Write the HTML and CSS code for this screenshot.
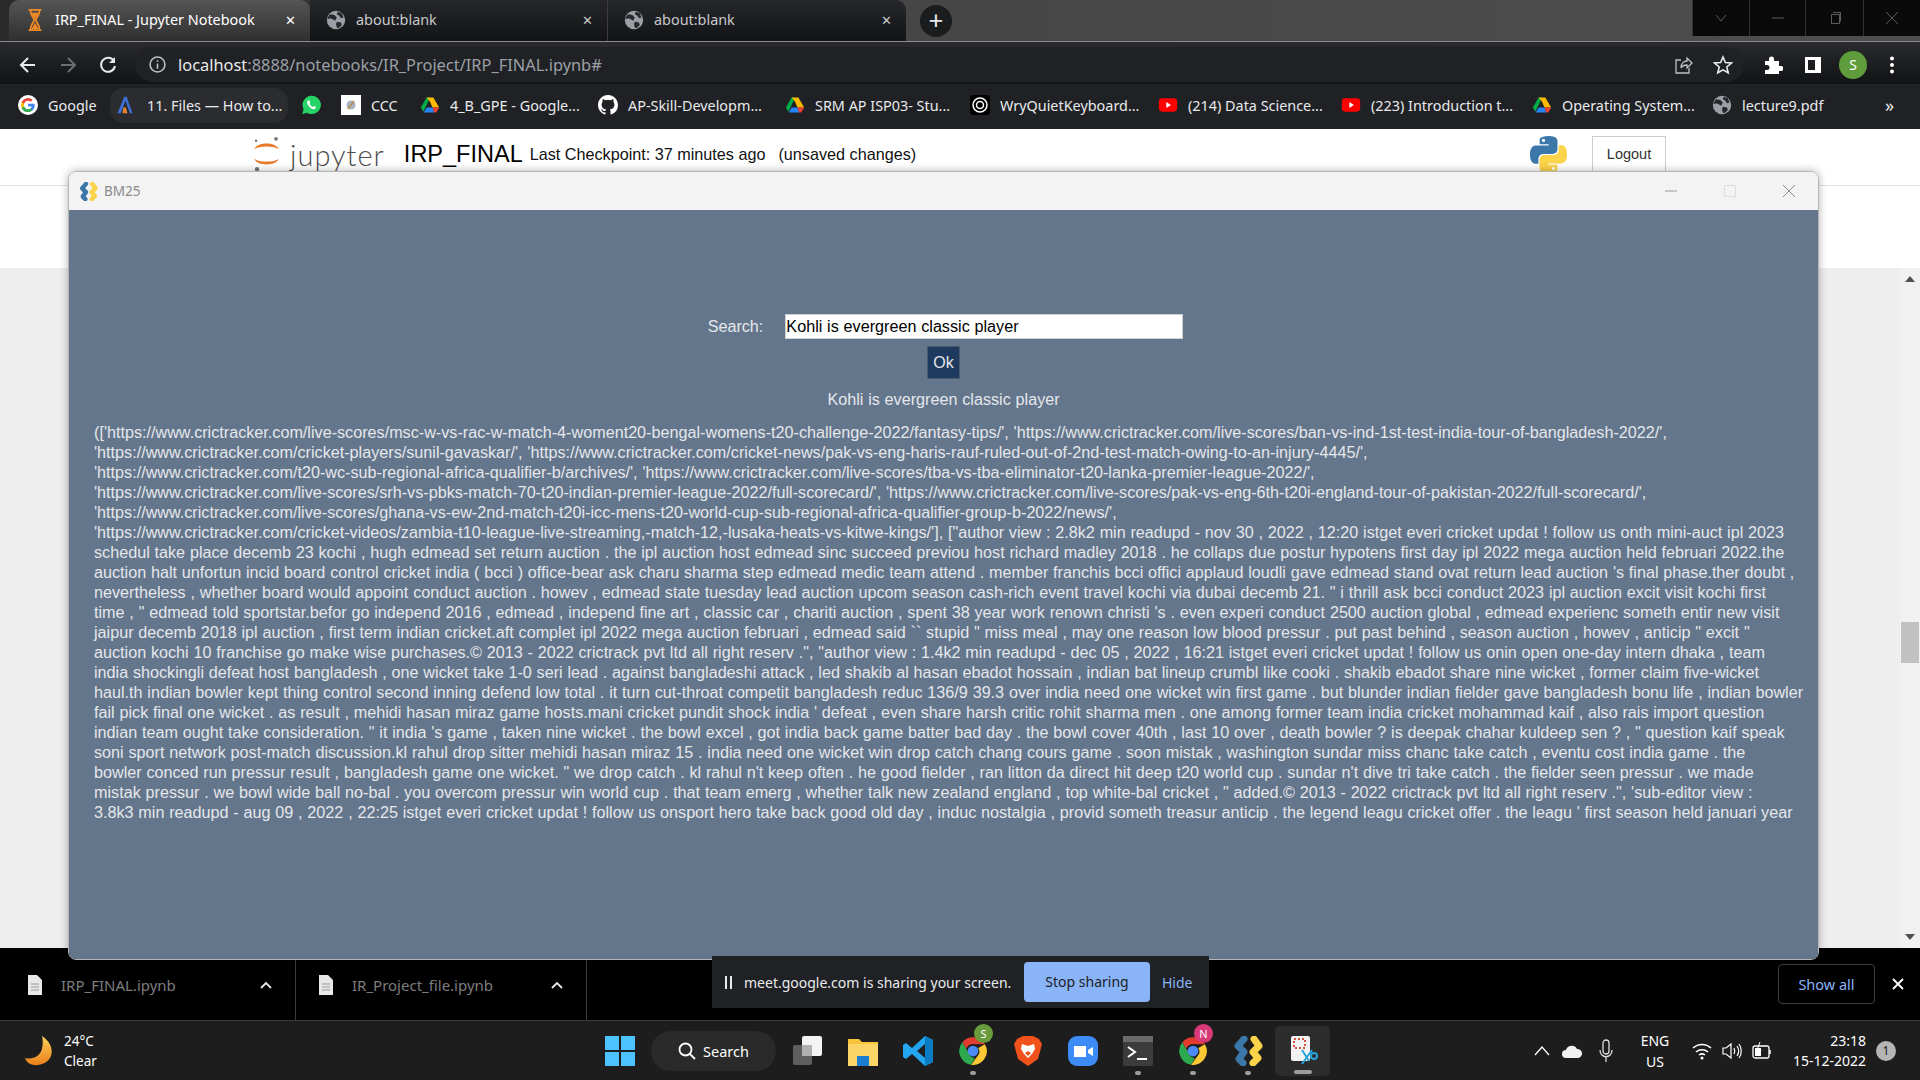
FILE: index.html
```html
<!DOCTYPE html>
<html lang="en">
<head>
    <meta charset="UTF-8">
    <title>IRP_FINAL - Jupyter Notebook</title>
    <link rel="stylesheet" href="styles.css">
</head>
<body>
    <!-- shared icons -->
    <svg class="defs" width="0" height="0">
        <symbol id="globe" viewBox="0 0 24 24">
            <circle cx="12" cy="12" r="11" fill="#9aa0a6"/>
            <path d="M5 5l5 1 3 3-2 4-3-2-3-1-3 1c0-2 1-4 3-6zM13 14l5 1 1 3-4 4-2-1-1-4zM14 2l5 2 2 5-3 1-2-3-3-2z" fill="#26282b"/>
        </symbol>
        <symbol id="drive" viewBox="0 0 24 24">
            <path d="M8 3h4L7 14 4 20 1 15z" fill="#00ac47"/>
            <path d="M8 3h8l7 12h-8L12 8z" fill="#ffba00"/>
            <path d="M8 15h7l2 6H4.500z" fill="#2684fc"/>
            <path d="M15 15h8l-3.500 6H17z" fill="#ea4335"/>
        </symbol>
        <symbol id="youtube" viewBox="0 0 24 24">
            <rect x="1" y="4" width="22" height="16" rx="4" fill="#f00"/>
            <path d="M10 8.500l5.500 3.500-5.500 3.500z" fill="#fff"/>
        </symbol>
        <symbol id="python" viewBox="0 0 110 110">
            <path fill-rule="evenodd" d="M54.900 0C26.800 0 28.600 12.200 28.600 12.200v12.600h26.800v3.800H17.900S0 26.600 0 54.900s15.600 27.300 15.600 27.300h9.300V69s-.5-15.600 15.400-15.600h26.500s14.900.2 14.900-14.400V14.900S84 0 54.900 0zM40.200 8.500a4.800 4.800 0 1 1 0 9.600 4.800 4.800 0 0 1 0-9.600z" fill="#3b77a8"/>
            <path fill-rule="evenodd" transform="rotate(180 55 55)" d="M54.900 0C26.800 0 28.600 12.200 28.600 12.200v12.600h26.800v3.800H17.900S0 26.600 0 54.900s15.600 27.300 15.600 27.300h9.300V69s-.5-15.600 15.400-15.600h26.500s14.900.2 14.900-14.400V14.900S84 0 54.900 0zM40.200 8.500a4.800 4.800 0 1 1 0 9.600 4.800 4.800 0 0 1 0-9.600z" fill="#fcd449"/>
        </symbol>
        <symbol id="python-app" viewBox="0 0 30 30">
            <path d="M11 3L5 10l6 6-5 7 4 4" fill="none" stroke="#3b77a8" stroke-width="7" stroke-linejoin="round" stroke-linecap="round"/>
            <path d="M21 3l5 7-6 6 5 6-5 5" fill="none" stroke="#fcd449" stroke-width="7" stroke-linejoin="round" stroke-linecap="round"/>
        </symbol>
        <symbol id="chrome" viewBox="0 0 24 24">
            <path d="M12 1a11 11 0 0 1 9.500 5.500H12a5.500 5.500 0 0 0-5.200 3.700L3.500 5A11 11 0 0 1 12 1z" fill="#e33b2e"/>
            <path d="M3.500 5l5 8.500a5.500 5.500 0 0 0 5 4l-3 5.400A11 11 0 0 1 3.500 5z" fill="#2da94f"/>
            <path d="M21.500 6.500A11 11 0 0 1 10.500 23l4.700-6.500a5.500 5.500 0 0 0 1-7z" fill="#fcc934"/>
            <circle cx="12" cy="12" r="4.300" fill="#4c8bf5"/>
        </symbol>
        <symbol id="doc" viewBox="0 0 14 20">
            <path d="M0 0h9l5 5v15H0z" fill="#e8e8e8"/>
            <path d="M3 9h8M3 12h8M3 15h8" stroke="#999" stroke-width="1"/>
        </symbol>
    </svg>

    <div class="tabstrip">
        <div class="tab tab-active">
            <svg class="tab-icon" viewBox="0 0 18 24"><path d="M2 1h14M2 23h14M4 1c0 7 4 8 4 11s-4 4-4 11M14 1c0 7-4 8-4 11s4 4 4 11" fill="none" stroke="#f08a24" stroke-width="2"/><path d="M5 4h8l-4 7zM9 15l4 7H5z" fill="#f08a24"/></svg>
            <span class="tab-title">IRP_FINAL - Jupyter Notebook</span>
            <span class="tab-close">&#10005;</span>
        </div>
        <div class="tab">
            <svg class="tab-icon"><use href="#globe"/></svg>
            <span class="tab-title">about:blank</span>
            <span class="tab-close">&#10005;</span>
        </div>
        <div class="tab tab-last">
            <svg class="tab-icon"><use href="#globe"/></svg>
            <span class="tab-title">about:blank</span>
            <span class="tab-close">&#10005;</span>
        </div>
        <div class="new-tab">+</div>
        <div class="win-controls">
            <div class="win-btn"><svg width="14" height="14" viewBox="0 0 14 14"><path d="M2 4l5 6 5-6" fill="none" stroke="#5d5d5d"/></svg></div>
            <div class="win-btn"><svg width="14" height="14" viewBox="0 0 14 14"><path d="M1 7h12" stroke="#5d5d5d"/></svg></div>
            <div class="win-btn"><svg width="14" height="14" viewBox="0 0 14 14"><path d="M3.500 3.500h8v9h-8zM5 1.500h7.500v9" fill="none" stroke="#5d5d5d"/></svg></div>
            <div class="win-btn"><svg width="14" height="14" viewBox="0 0 14 14"><path d="M1 1l12 12M13 1L1 13" stroke="#5d5d5d"/></svg></div>
        </div>
    </div>

    <div class="toolbar">
        <svg class="nav-icon" viewBox="0 0 20 20"><path d="M17 10H4M10 3l-7 7 7 7" fill="none" stroke="#e8eaed" stroke-width="2"/></svg>
        <svg class="nav-icon" viewBox="0 0 20 20"><path d="M3 10h13M10 3l7 7-7 7" fill="none" stroke="#6b6d70" stroke-width="2"/></svg>
        <svg class="nav-icon" viewBox="0 0 20 20"><path d="M16 6a7 7 0 1 0 1 5" fill="none" stroke="#e8eaed" stroke-width="2"/><path d="M17 2v6h-6z" fill="#e8eaed"/></svg>
        <div class="omnibox">
            <svg class="info-icon" viewBox="0 0 16 16"><circle cx="8" cy="8" r="7" fill="none" stroke="#bdc1c6" stroke-width="1.500"/><path d="M8 7v5M8 4v1.500" stroke="#bdc1c6" stroke-width="1.500"/></svg>
            <span class="url-host">localhost</span><span class="url-rest">:8888/notebooks/IR_Project/IRP_FINAL.ipynb#</span>
            <svg class="omni-icon omni-share" viewBox="0 0 20 20"><path d="M8 5H3v13h13v-5M8 13c0-5 3-7 6-7V3l5 5-5 5v-3c-3 0-5 1-6 3z" fill="none" stroke="#bdc1c6" stroke-width="1.300"/></svg>
            <svg class="omni-icon" viewBox="0 0 20 20"><path d="M10 2l2.400 5.500 6 .5-4.600 4 1.400 5.800L10 14.800l-5.200 3 1.400-5.800-4.600-4 6-.5z" fill="none" stroke="#e8eaed" stroke-width="1.600"/></svg>
        </div>
        <svg class="tool-icon tool-puzzle" viewBox="0 0 20 20"><path d="M2 6h4V4a2.500 2.500 0 0 1 5 0v2h5v5h2a2.500 2.500 0 0 1 0 5h-2v3H2v-4h2a2.500 2.500 0 0 0 0-5H2z" fill="#fff"/></svg>
        <svg class="tool-icon" viewBox="0 0 20 20"><path d="M2 2h16v16H2zM5 5v10h7V5z" fill="#fff" fill-rule="evenodd"/></svg>
        <div class="avatar">S</div>
        <svg class="tool-icon tool-dots" viewBox="0 0 20 20"><circle cx="10" cy="3.500" r="2" fill="#fff"/><circle cx="10" cy="10" r="2" fill="#fff"/><circle cx="10" cy="16.500" r="2" fill="#fff"/></svg>
    </div>

    <div class="bookmarks">
        <div class="bm">
            <svg class="bm-icon" viewBox="0 0 24 24"><circle cx="12" cy="12" r="12" fill="#fff"/><path d="M20 12.300c0-.6-.1-1.200-.2-1.700H12v3.200h4.500a3.900 3.900 0 0 1-1.700 2.500v2.100h2.700c1.600-1.400 2.500-3.500 2.500-6.100z" fill="#4285f4"/><path d="M12 20.500c2.300 0 4.200-.8 5.500-2.100l-2.700-2.100c-.7.500-1.700.8-2.800.8-2.200 0-4-1.500-4.700-3.500H4.500v2.200a8.500 8.500 0 0 0 7.500 4.700z" fill="#34a853"/><path d="M7.300 13.600a5 5 0 0 1 0-3.200V8.200H4.500a8.500 8.500 0 0 0 0 7.600z" fill="#fbbc05"/><path d="M12 6.900c1.200 0 2.400.4 3.200 1.300l2.400-2.400A8.500 8.500 0 0 0 4.500 8.200l2.800 2.200C8 8.400 9.800 6.900 12 6.900z" fill="#ea4335"/></svg>
            <span>Google</span>
        </div>
        <div class="bm bm-chip">
            <svg class="bm-icon" viewBox="0 0 24 24"><path d="M11 2h3l7 20h-3L12.500 7 7 22H3z" fill="#3b6fd4"/><path d="M10 15h3l2 7h-6z" fill="#e8862e"/></svg>
            <span>11. Files &mdash; How to...</span>
        </div>
        <div class="bm">
            <svg class="bm-icon" viewBox="0 0 24 24"><path d="M1.500 23l1.600-6A11 11 0 1 1 7 21.200z" fill="#25d366"/><path d="M8.500 6.500c-2 1.500-1.500 4 1 7s5.500 4.500 7.500 3c1-.8 1-2 .6-2.300l-2.200-1.100-1.200 1.300c-1.500-.5-3.300-2.200-4-3.800l1-1.300-1-2.500c-.4-.6-1.200-.6-1.700-.3z" fill="#fff"/></svg>
        </div>
        <div class="bm">
            <svg class="bm-icon" viewBox="0 0 20 20"><rect width="20" height="20" fill="#fff"/><circle cx="10" cy="10" r="4.500" fill="#a9b4c6"/><path d="M7 14l6-8" stroke="#b88a4a" stroke-width="1.500"/></svg>
            <span>CCC</span>
        </div>
        <div class="bm">
            <svg class="bm-icon"><use href="#drive"/></svg>
            <span>4_B_GPE - Google...</span>
        </div>
        <div class="bm">
            <svg class="bm-icon" viewBox="0 0 16 16"><path fill="#fff" d="M8 0C3.580 0 0 3.580 0 8c0 3.540 2.290 6.530 5.470 7.590.4.070.55-.17.55-.38v-1.340c-2.230.48-2.700-1.070-2.700-1.070-.36-.92-.89-1.170-.89-1.170-.73-.5.050-.49.050-.49.800.060 1.230.830 1.230.830.720 1.220 1.870.870 2.330.660.070-.520.280-.870.510-1.070-1.780-.2-3.640-.890-3.640-3.950 0-.870.310-1.590.820-2.150-.080-.2-.360-1.020.080-2.120 0 0 .670-.210 2.200.820a7.660 7.660 0 0 1 4 0c1.530-1.040 2.200-.820 2.200-.820.440 1.100.160 1.920.080 2.120.510.560.820 1.270.820 2.150 0 3.070-1.870 3.750-3.650 3.950.290.250.540.730.540 1.480v2.200c0 .210.150.460.550.380A8.010 8.010 0 0 0 16 8c0-4.420-3.580-8-8-8z"/></svg>
            <span>AP-Skill-Developm...</span>
        </div>
        <div class="bm">
            <svg class="bm-icon"><use href="#drive"/></svg>
            <span>SRM AP ISP03- Stu...</span>
        </div>
        <div class="bm">
            <svg class="bm-icon" viewBox="0 0 20 20"><rect width="20" height="20" rx="3" fill="#000"/><circle cx="10" cy="10" r="7" fill="none" stroke="#fff" stroke-width="1.500"/><circle cx="10" cy="10" r="3.500" fill="none" stroke="#fff" stroke-width="1.500"/></svg>
            <span>WryQuietKeyboard...</span>
        </div>
        <div class="bm">
            <svg class="bm-icon"><use href="#youtube"/></svg>
            <span>(214) Data Science...</span>
        </div>
        <div class="bm">
            <svg class="bm-icon"><use href="#youtube"/></svg>
            <span>(223) Introduction t...</span>
        </div>
        <div class="bm">
            <svg class="bm-icon"><use href="#drive"/></svg>
            <span>Operating System...</span>
        </div>
        <div class="bm">
            <svg class="bm-icon"><use href="#globe"/></svg>
            <span>lecture9.pdf</span>
        </div>
        <div class="bm-more">&raquo;</div>
    </div>

    <div class="desktop">
        <div class="notebook">
            <div class="nb-header">
                <div class="nb-title-row">
                    <svg class="jupyter-logo" viewBox="0 0 32 38">
                        <path d="M3 14C6 6 26 6 29 14 24 10 8 10 3 14z" fill="#e87a2b"/>
                        <path d="M3 24c3 8 23 8 26 0-5 4-21 4-26 0z" fill="#e87a2b"/>
                        <circle cx="26" cy="3" r="2" fill="#767677"/>
                        <circle cx="5" cy="5" r="1.300" fill="#767677"/>
                        <circle cx="6" cy="35" r="2.300" fill="#767677"/>
                    </svg>
                    <span class="jupyter-word">jupyter</span>
                    <span class="nb-name">IRP_FINAL</span>
                    <span class="nb-checkpoint">Last Checkpoint: 37 minutes ago</span>
                    <span class="nb-unsaved">(unsaved changes)</span>
                    <svg class="nb-python"><use href="#python"/></svg>
                    <div class="logout">Logout</div>
                </div>
                <div class="nb-line"></div>
            </div>
            <div class="nb-body">
                <div class="nb-scroll">
                    <svg class="scroll-arrow" viewBox="0 0 10 6"><path d="M5 0l5 6H0z" fill="#505050"/></svg>
                    <div class="scroll-thumb"></div>
                    <svg class="scroll-arrow" viewBox="0 0 10 6"><path d="M5 6L0 0h10z" fill="#505050"/></svg>
                </div>
            </div>
        </div>

        <div class="window">
            <div class="window-title">
                <svg class="window-icon"><use href="#python-app"/></svg>
                <span class="window-name">BM25</span>
                <div class="window-btns">
                    <svg width="14" height="14" viewBox="0 0 14 14"><path d="M1 7h12" stroke="#9a9a9a"/></svg>
                    <svg width="14" height="14" viewBox="0 0 14 14"><path d="M1.500 1.500h11v11h-11z" fill="none" stroke="#dcdcdc"/></svg>
                    <svg width="14" height="14" viewBox="0 0 14 14"><path d="M1 1l12 12M13 1L1 13" stroke="#8a8a8a"/></svg>
                </div>
            </div>
            <div class="window-body">
                <div class="search-row">
                    <label class="search-label" for="query">Search:</label>
                    <input class="search-input" id="query" type="text" value="Kohli is evergreen classic player">
                </div>
                <button class="ok-btn" type="button">Ok</button>
                <div class="query-echo">Kohli is evergreen classic player</div>
                <div class="results">
                    <div>(['https://www.crictracker.com/live-scores/msc-w-vs-rac-w-match-4-woment20-bengal-womens-t20-challenge-2022/fantasy-tips/', 'https://www.crictracker.com/live-scores/ban-vs-ind-1st-test-india-tour-of-bangladesh-2022/',</div>
                    <div>'https://www.crictracker.com/cricket-players/sunil-gavaskar/', 'https://www.crictracker.com/cricket-news/pak-vs-eng-haris-rauf-ruled-out-of-2nd-test-match-owing-to-an-injury-4445/',</div>
                    <div>'https://www.crictracker.com/t20-wc-sub-regional-africa-qualifier-b/archives/', 'https://www.crictracker.com/live-scores/tba-vs-tba-eliminator-t20-lanka-premier-league-2022/',</div>
                    <div>'https://www.crictracker.com/live-scores/srh-vs-pbks-match-70-t20-indian-premier-league-2022/full-scorecard/', 'https://www.crictracker.com/live-scores/pak-vs-eng-6th-t20i-england-tour-of-pakistan-2022/full-scorecard/',</div>
                    <div>'https://www.crictracker.com/live-scores/ghana-vs-ew-2nd-match-t20i-icc-mens-t20-world-cup-sub-regional-africa-qualifier-group-b-2022/news/',</div>
                    <div>'https://www.crictracker.com/cricket-videos/zambia-t10-league-live-streaming,-match-12,-lusaka-heats-vs-kitwe-kings/'], ["author view : 2.8k2 min readupd - nov 30 , 2022 , 12:20 istget everi cricket updat ! follow us onth mini-auct ipl 2023</div>
                    <div>schedul take place decemb 23 kochi , hugh edmead set return auction . the ipl auction host edmead sinc succeed previou host richard madley 2018 . he collaps due postur hypotens first day ipl 2022 mega auction held februari 2022.the</div>
                    <div>auction halt unfortun incid board control cricket india ( bcci ) office-bear ask charu sharma step edmead medic team attend . member franchis bcci offici applaud loudli gave edmead stand ovat return lead auction 's final phase.ther doubt ,</div>
                    <div>nevertheless , whether board would appoint conduct auction . howev , edmead state tuesday lead auction upcom season cash-rich event travel kochi via dubai decemb 21. " i thrill ask bcci conduct 2023 ipl auction excit visit kochi first</div>
                    <div>time , " edmead told sportstar.befor go independ 2016 , edmead , independ fine art , classic car , chariti auction , spent 38 year work renown christi 's . even experi conduct 2500 auction global , edmead experienc someth entir new visit</div>
                    <div>jaipur decemb 2018 ipl auction , first term indian cricket.aft complet ipl 2022 mega auction februari , edmead said `` stupid " miss meal , may one reason low blood pressur . put past behind , season auction , howev , anticip " excit "</div>
                    <div>auction kochi 10 franchise go make wise purchases.&copy; 2013 - 2022 crictrack pvt ltd all right reserv .", "author view : 1.4k2 min readupd - dec 05 , 2022 , 16:21 istget everi cricket updat ! follow us onin open one-day intern dhaka , team</div>
                    <div>india shockingli defeat host bangladesh , one wicket take 1-0 seri lead . against bangladeshi attack , led shakib al hasan ebadot hossain , indian bat lineup crumbl like cooki . shakib ebadot share nine wicket , former claim five-wicket</div>
                    <div>haul.th indian bowler kept thing control second inning defend low total . it turn cut-throat competit bangladesh reduc 136/9 39.3 over india need one wicket win first game . but blunder indian fielder gave bangladesh bonu life , indian bowler</div>
                    <div>fail pick final one wicket . as result , mehidi hasan miraz game hosts.mani cricket pundit shock india ' defeat , even share harsh critic rohit sharma men . one among former team india cricket mohammad kaif , also rais import question</div>
                    <div>indian team ought take consideration. " it india 's game , taken nine wicket . the bowl excel , got india back game batter bad day . the bowl cover 40th , last 10 over , death bowler ? is deepak chahar kuldeep sen ? , " question kaif speak</div>
                    <div>soni sport network post-match discussion.kl rahul drop sitter mehidi hasan miraz 15 . india need one wicket win drop catch chang cours game . soon mistak , washington sundar miss chanc take catch , eventu cost india game . the</div>
                    <div>bowler conced run pressur result , bangladesh game one wicket. " we drop catch . kl rahul n't keep often . he good fielder , ran litton da direct hit deep t20 world cup . sundar n't dive tri take catch . the fielder seen pressur . we made</div>
                    <div>mistak pressur . we bowl wide ball no-bal . you overcom pressur win world cup . that team emerg , whether talk new zealand england , top white-bal cricket , " added.&copy; 2013 - 2022 crictrack pvt ltd all right reserv .", 'sub-editor view :</div>
                    <div>3.8k3 min readupd - aug 09 , 2022 , 22:25 istget everi cricket updat ! follow us onsport hero take back good old day , induc nostalgia , provid someth treasur anticip . the legend leagu cricket offer . the leagu ' first season held januari year</div>
                </div>
            </div>
        </div>
    </div>

    <div class="downloads">
        <div class="dl-item">
            <svg class="dl-doc"><use href="#doc"/></svg>
            <span class="dl-name">IRP_FINAL.ipynb</span>
            <svg class="dl-caret" viewBox="0 0 12 8"><path d="M1 7l5-5 5 5" fill="none" stroke="#e8eaed" stroke-width="1.800"/></svg>
        </div>
        <div class="dl-item">
            <svg class="dl-doc"><use href="#doc"/></svg>
            <span class="dl-name">IR_Project_file.ipynb</span>
            <svg class="dl-caret" viewBox="0 0 12 8"><path d="M1 7l5-5 5 5" fill="none" stroke="#e8eaed" stroke-width="1.800"/></svg>
        </div>
        <div class="share-bar">
            <span class="share-pause"></span>
            <span class="share-text">meet.google.com is sharing your screen.</span>
            <span class="share-stop">Stop sharing</span>
            <span class="share-hide">Hide</span>
        </div>
        <div class="show-all">Show all</div>
        <svg class="dl-close" viewBox="0 0 12 12"><path d="M1 1l10 10M11 1L1 11" stroke="#fff" stroke-width="1.800"/></svg>
    </div>

    <div class="taskbar">
        <div class="weather">
            <svg class="moon" viewBox="0 0 28 30"><path d="M17 0C26 6 28 14 26 20 23 28 12 31 5 28 3 27 1 25 0 22 8 24 15 20 17 13 18 8 18 4 17 0z" fill="url(#moon-fill)"/><defs><linearGradient id="moon-fill" x1="0" y1="0" x2="0" y2="1"><stop offset="0" stop-color="#fbd15b"/><stop offset="1" stop-color="#ea7f1a"/></linearGradient></defs></svg>
            <div class="weather-text">
                <div>24&deg;C</div>
                <div>Clear</div>
            </div>
        </div>
        <div class="task-app">
            <svg class="app-icon" viewBox="0 0 30 30"><path d="M0 0h14v14H0zM16 0h14v14H16zM0 16h14v14H0zM16 16h14v14H16z" fill="#4cc2ff"/></svg>
        </div>
        <div class="task-search">
            <svg class="search-glass" viewBox="0 0 18 18"><circle cx="7.500" cy="7.500" r="6" fill="none" stroke="#fff" stroke-width="1.800"/><path d="M12 12l5 5" stroke="#fff" stroke-width="1.800"/></svg>
            <span>Search</span>
        </div>
        <div class="task-app">
            <svg class="app-icon" viewBox="0 0 30 30"><rect x="0" y="9" width="19" height="20" rx="2" fill="#5e5e5e"/><rect x="9" y="0" width="20" height="20" rx="2" fill="#f4f4f4"/><rect x="9" y="9" width="10" height="11" fill="#b0b0b0"/></svg>
        </div>
        <div class="task-app">
            <svg class="app-icon" viewBox="0 0 30 30"><path d="M0 3h11l3 3h16v24H0z" fill="#f9c43a"/><path d="M0 8h30v22H0z" fill="#fbd667"/><path d="M9 20h12v10H9z" fill="#1c7ed0"/></svg>
        </div>
        <div class="task-app">
            <svg class="app-icon" viewBox="0 0 30 30"><path d="M22 0l8 4v22l-8 4L9 18l-6 5-3-2V9l3-2 6 5z" fill="#23a6f0"/><path d="M22 8l-8 7 8 7z" fill="#1f1f1f"/><path d="M22 0l8 4v22l-8 4z" fill="#0a7cc4"/></svg>
        </div>
        <div class="task-app has-dot">
            <svg class="app-icon"><use href="#chrome"/></svg>
            <span class="app-badge badge-green">S</span>
        </div>
        <div class="task-app">
            <svg class="app-icon" viewBox="0 0 30 30"><path d="M4 3l6-3h10l6 3 3 5-4 15-10 7-10-7L1 8z" fill="#f1511b"/><path d="M15 10l-6-2-1 5 3 5 4 4 4-4 3-5-1-5z" fill="#fff"/><path d="M15 15l-3 2 3 3 3-3z" fill="#f1511b"/></svg>
        </div>
        <div class="task-app">
            <svg class="app-icon" viewBox="0 0 30 30"><rect width="30" height="30" rx="9" fill="#3d8cf6"/><path d="M6 10h12v11H6zM20 14l5-3v9l-5-3z" fill="#fff"/></svg>
        </div>
        <div class="task-app has-dot">
            <svg class="app-icon" viewBox="0 0 30 30"><rect width="30" height="30" rx="2" fill="#3c3c3c"/><rect width="30" height="6" fill="#6a6a6a"/><path d="M5 11l7 5-7 5" fill="none" stroke="#fff" stroke-width="2"/><path d="M14 23h10" stroke="#fff" stroke-width="2"/></svg>
        </div>
        <div class="task-app has-dot">
            <svg class="app-icon"><use href="#chrome"/></svg>
            <span class="app-badge badge-pink">N</span>
        </div>
        <div class="task-app has-dot">
            <svg class="app-icon"><use href="#python-app"/></svg>
        </div>
        <div class="task-app task-active has-bar">
            <svg class="app-icon" viewBox="0 0 30 30"><rect x="3" y="0" width="19" height="25" rx="2" fill="#f2f2f2"/><path d="M6 3h11v9H6z" fill="none" stroke="#d4553f" stroke-width="2" stroke-dasharray="2 2"/><path d="M14 14l7 11M24 14l-10 14" stroke="#27a3dd" stroke-width="2"/><circle cx="26" cy="20" r="3" fill="none" stroke="#27a3dd" stroke-width="2"/></svg>
        </div>
        <div class="tray">
            <svg class="tray-caret" viewBox="0 0 16 10"><path d="M1 9l7-8 7 8" fill="none" stroke="#fff" stroke-width="1.300"/></svg>
            <svg class="tray-cloud" viewBox="0 0 20 14"><path d="M4 14a4 4 0 0 1 0-8 6 6 0 0 1 11-1 4.500 4.500 0 0 1 1 9z" fill="#f2f2f2"/></svg>
            <svg class="tray-mic" viewBox="0 0 14 24"><rect x="4" y="1" width="6" height="14" rx="3" fill="none" stroke="#ddd" stroke-width="1.300"/><path d="M1 11c0 9 12 9 12 0M7 18v5" fill="none" stroke="#ddd" stroke-width="1.300"/></svg>
            <div class="tray-lang">
                <div>ENG</div>
                <div>US</div>
            </div>
            <svg class="tray-wifi" viewBox="0 0 20 18"><path d="M1 6a13 13 0 0 1 18 0M4 10a9 9 0 0 1 12 0M7 13a5 5 0 0 1 6 0" fill="none" stroke="#fff" stroke-width="1.500"/><circle cx="10" cy="16" r="1.500" fill="#fff"/></svg>
            <svg class="tray-sound" viewBox="0 0 20 18"><path d="M1 6h3l5-4v14l-5-4H1zM12 6c1 2 1 4 0 6M15 4c2 3 2 7 0 10M17 2c3 4 3 10 0 14" fill="none" stroke="#fff" stroke-width="1.200"/></svg>
            <svg class="tray-battery" viewBox="0 0 20 18"><rect x="1" y="4" width="16" height="12" rx="2" fill="none" stroke="#fff" stroke-width="1.300"/><path d="M18 8v4" stroke="#fff" stroke-width="1.500"/><path d="M3 6h6v8H3z" fill="#fff"/><path d="M8 0L5 8h4l-2 6" fill="none" stroke="#fff"/></svg>
            <div class="tray-clock">
                <div>23:18</div>
                <div>15-12-2022</div>
            </div>
            <div class="tray-notify">1</div>
        </div>
    </div>
</body>
</html>
```

FILE: styles.css
```css
* {
    box-sizing: border-box;
}
html, body {
    margin: 0;
    padding: 0;
    height: 100%;
}
body {
    width: 1920px;
    height: 1080px;
    overflow: hidden;
    display: flex;
    flex-direction: column;
    background-color: #000;
    font-family: 'Noto Sans', sans-serif;
}
.defs {
    position: absolute;
}

/* browser tabs */
.tabstrip {
    height: 42px;
    flex: none;
    display: flex;
    align-items: flex-end;
    padding-left: 9px;
    position: relative;
    background: linear-gradient(90deg, #2a2a2a 0%, #454545 40%, #4e4e4e 100%);
    border-bottom: 1px solid #8a8a8a;
}
.tab {
    width: 298px;
    height: 41px;
    display: flex;
    align-items: center;
    padding: 0 14px 2px 16px;
    color: #c8c9cb;
    font-size: 14.400px;
    background: linear-gradient(180deg, #26272a, #121315);
    border-right: 1px solid #3c3c3c;
}
.tab-active {
    width: 301px;
    color: #fff;
    background: linear-gradient(180deg, #555, #2f2f2f);
    border-radius: 10px 10px 0 0;
    border-right: none;
}
.tab-last {
    border-right: none;
    border-radius: 0 10px 0 0;
}
.tab-icon {
    width: 20px;
    height: 22px;
    flex: none;
    margin-right: 10px;
}
.tab-title {
    flex: 1;
    white-space: nowrap;
}
.tab-close {
    font-size: 13px;
}
.new-tab {
    width: 32px;
    height: 32px;
    margin: 0 0 4px 14px;
    border-radius: 50%;
    background-color: #1b1c1e;
    color: #e8eaed;
    font-size: 26px;
    line-height: 30px;
    text-align: center;
}
.win-controls {
    position: absolute;
    top: 0;
    right: 0;
    height: 36px;
    width: 228px;
    display: grid;
    grid-template-columns: 57px 56px 58px 57px;
    background-color: #0a0a0a;
}
.win-btn {
    display: flex;
    align-items: center;
    justify-content: center;
    border-left: 1px solid #333;
}

/* address row */
.toolbar {
    height: 42px;
    flex: none;
    display: flex;
    align-items: center;
    padding: 3px 0 0 18px;
    background: linear-gradient(180deg, #2a2b2e, #111214);
}
.nav-icon {
    width: 20px;
    height: 20px;
    flex: none;
    margin-right: 20px;
}
.omnibox {
    width: 1609px;
    height: 35px;
    margin: 0 0 0 -3px;
    display: flex;
    align-items: center;
    padding: 0 11px 0 14px;
    border-radius: 18px;
    background-color: #202124;
    font-size: 16.400px;
}
.info-icon {
    width: 17px;
    height: 17px;
    margin-right: 12px;
}
.url-host {
    color: #e8eaed;
}
.url-rest {
    color: #9aa0a6;
}
.omni-icon {
    width: 20px;
    height: 20px;
    margin-left: 20px;
}
.omni-share {
    margin-left: auto;
}
.tool-icon {
    width: 20px;
    height: 20px;
    flex: none;
    margin-right: 20px;
}
.tool-puzzle {
    margin-left: 19px;
}
.tool-dots {
    margin: 0 0 0 15px;
}
.avatar {
    width: 28px;
    height: 28px;
    flex: none;
    margin-left: -4px;
    border-radius: 50%;
    background-color: #5f9c3c;
    color: #fff;
    font-size: 14px;
    line-height: 28px;
    text-align: center;
}

/* bookmarks */
.bookmarks {
    height: 45px;
    flex: none;
    display: grid;
    grid-template-columns: 92px 191px 40px 79px 178px 187px 185px 188px 183px 191px 180px 178px auto;
    align-items: center;
    padding: 0 0 3px 18px;
    background-color: #202124;
    color: #e8eaed;
    font-size: 14.400px;
}
.bm {
    display: flex;
    align-items: center;
    gap: 10px;
    white-space: nowrap;
}
.bm-chip {
    width: 178px;
    height: 35px;
    padding-left: 5px;
    gap: 12px;
    border-radius: 14px;
    background-color: #2b2c2f;
}
.bm-icon {
    width: 20px;
    height: 20px;
    flex: none;
}
.bm-more {
    margin-left: -5px;
    font-size: 18px;
}

/* notebook behind the window */
.desktop {
    height: 819px;
    flex: none;
    position: relative;
}
.notebook {
    height: 100%;
    display: flex;
    flex-direction: column;
    background-color: #eee;
    font-family: 'Liberation Sans', Arial, sans-serif;
}
.nb-header {
    height: 139px;
    flex: none;
    background-color: #fff;
}
.nb-title-row {
    height: 50px;
    margin-bottom: 6px;
    display: flex;
    align-items: center;
    padding-left: 251px;
}
.jupyter-logo {
    width: 31px;
    height: 36px;
    flex: none;
}
.jupyter-word {
    margin-left: 8px;
    font-family: 'Lato', sans-serif;
    font-weight: 300;
    font-size: 29px;
    letter-spacing: 1px;
    color: #4e4e4e;
    line-height: 1;
}
.nb-name {
    margin-left: 19px;
    font-size: 23.500px;
    color: #000;
}
.nb-checkpoint {
    margin-left: 7px;
    padding-top: 1px;
    font-size: 16.200px;
    color: #111;
}
.nb-unsaved {
    margin-left: 13px;
    padding-top: 1px;
    font-size: 16.200px;
    color: #111;
}
.nb-python {
    width: 37px;
    height: 37px;
    margin-left: auto;
}
.logout {
    width: 74px;
    height: 37px;
    margin: 0 254px 0 25px;
    border: 1px solid #ccc;
    font-size: 14.500px;
    line-height: 35px;
    text-align: center;
    color: #333;
}
.nb-line {
    height: 1px;
    background-color: #e2e2e2;
}
.nb-body {
    flex: 1;
    display: flex;
    justify-content: flex-end;
}
.nb-scroll {
    width: 20px;
    display: flex;
    flex-direction: column;
    align-items: center;
    padding: 8px 0 8px;
    background-color: #f1f1f1;
}
.scroll-arrow {
    width: 10px;
    height: 6px;
    flex: none;
}
.scroll-thumb {
    width: 18px;
    height: 41px;
    margin: 340px 0 auto;
    background-color: #c1c1c1;
}

/* BM25 tk window */
.window {
    position: absolute;
    z-index: 2;
    left: 68px;
    top: 42px;
    width: 1751px;
    height: 789px;
    display: flex;
    flex-direction: column;
    border-radius: 8px;
    overflow: hidden;
    box-shadow: 0 0 8px rgba(0, 0, 0, 0.3);
    border: 1px solid #b5b5b5;
    font-family: 'Liberation Sans', Arial, sans-serif;
}
.window-title {
    height: 38px;
    flex: none;
    display: flex;
    align-items: center;
    padding-left: 10px;
    background-color: #f3f3f3;
}
.window-icon {
    width: 19px;
    height: 19px;
    margin-right: 6px;
}
.window-name {
    font-family: 'Noto Sans', sans-serif;
    font-size: 13.500px;
    color: #8a8a8a;
}
.window-btns {
    margin-left: auto;
    display: flex;
    gap: 45px;
    padding-right: 22px;
}
.window-body {
    flex: 1;
    display: flex;
    flex-direction: column;
    align-items: center;
    padding-top: 104px;
    background-color: #64768c;
    color: #e4e7eb;
    font-size: 16.180px;
    word-spacing: 0.300px;
}
.search-row {
    display: flex;
    align-items: center;
    gap: 22px;
    margin-left: 4px;
}
.search-label {
    color: #e4e7eb;
}
.search-input {
    width: 398px;
    height: 25px;
    padding: 0;
    border: 1px solid #d0d0d0;
    background-color: #fff;
    color: #000;
    font-family: 'Liberation Sans', Arial, sans-serif;
    font-size: 16.180px;
    word-spacing: 0.300px;
}
.ok-btn {
    width: 33px;
    height: 33px;
    margin-top: 7px;
    padding: 0;
    border: 1px solid #4b5a6e;
    background-color: #1e3a5f;
    color: #e4e7eb;
    font-family: 'Liberation Sans', Arial, sans-serif;
    font-size: 16px;
}
.query-echo {
    margin-top: 10px;
    line-height: 20px;
}
.results {
    align-self: stretch;
    margin-top: 13px;
    padding-left: 25px;
    line-height: 20px;
    white-space: nowrap;
}

/* downloads */
.downloads {
    height: 72px;
    flex: none;
    position: relative;
    display: flex;
    align-items: flex-end;
    background-color: #000;
}
.dl-item {
    width: 296px;
    height: 60px;
    display: flex;
    align-items: center;
    padding: 0 0 10px 28px;
    border-right: 1px solid #3c3c3c;
    color: #7d7d7d;
    font-size: 15px;
}
.dl-item + .dl-item {
    width: 291px;
    padding-left: 23px;
}
.dl-doc {
    width: 14px;
    height: 20px;
    flex: none;
    margin-right: 19px;
}
.dl-name {
    flex: 1;
    white-space: nowrap;
}
.dl-caret {
    width: 12px;
    height: 8px;
    flex: none;
    margin-right: 23px;
}
.share-bar {
    position: absolute;
    z-index: 3;
    left: 712px;
    top: 8px;
    width: 497px;
    height: 52px;
    display: flex;
    align-items: center;
    padding-left: 13px;
    background-color: #202124;
    color: #e8eaed;
    font-size: 14px;
}
.share-pause {
    width: 7px;
    height: 13px;
    margin-right: 12px;
    border-left: 2px solid #e8eaed;
    border-right: 2px solid #e8eaed;
}
.share-text {
    width: 280px;
    white-space: nowrap;
}
.share-stop {
    width: 126px;
    height: 40px;
    border-radius: 4px;
    background-color: #8ab4f8;
    color: #202124;
    line-height: 40px;
    text-align: center;
}
.share-hide {
    margin-left: 12px;
    color: #8ab4f8;
}
.show-all {
    margin: 0 0 16px auto;
    width: 97px;
    height: 40px;
    border: 1px solid #3c4043;
    border-radius: 4px;
    color: #8ab4f8;
    font-size: 14.500px;
    line-height: 38px;
    text-align: center;
}
.dl-close {
    width: 12px;
    height: 12px;
    flex: none;
    margin: 0 16px 30px 17px;
}

/* taskbar */
.taskbar {
    height: 60px;
    flex: none;
    display: flex;
    align-items: center;
    border-top: 1px solid #3c3c3c;
    background-color: #1d1d1d;
    color: #fff;
    font-size: 14px;
}
.weather {
    width: 592px;
    flex: none;
    display: flex;
    align-items: center;
    padding-left: 25px;
}
.moon {
    width: 28px;
    height: 30px;
    margin-right: 11px;
}
.weather-text {
    line-height: 20px;
    font-size: 13.500px;
}
.task-app {
    width: 55px;
    height: 50px;
    flex: none;
    position: relative;
    display: flex;
    align-items: center;
    justify-content: center;
}
.app-icon {
    width: 30px;
    height: 30px;
}
.task-active {
    border-radius: 5px;
    background-color: #2c2c2c;
}
.has-dot::after, .has-bar::after {
    content: '';
    position: absolute;
    bottom: 1px;
    left: 50%;
    width: 6px;
    height: 4px;
    margin-left: -3px;
    border-radius: 2px;
    background-color: #9d9d9d;
}
.has-bar::after {
    width: 18px;
    margin-left: -9px;
    bottom: 2px;
}
.app-badge {
    position: absolute;
    top: -2px;
    right: 7px;
    width: 19px;
    height: 19px;
    border-radius: 50%;
    font-size: 11px;
    line-height: 19px;
    text-align: center;
}
.badge-green {
    background-color: #6a9c3d;
}
.badge-pink {
    background-color: #d83a78;
}
.task-search {
    width: 125px;
    height: 40px;
    flex: none;
    margin: 0 4px;
    display: flex;
    align-items: center;
    justify-content: center;
    gap: 7px;
    border-radius: 20px;
    background-color: #2a2a2a;
    font-size: 14.500px;
}
.search-glass {
    width: 18px;
    height: 18px;
}
.tray {
    flex: 1;
    display: flex;
    align-items: center;
    padding-left: 204px;
}
.tray-caret {
    width: 16px;
    height: 10px;
}
.tray-cloud {
    width: 20px;
    height: 14px;
    margin-left: 12px;
}
.tray-mic {
    width: 14px;
    height: 24px;
    margin-left: 17px;
}
.tray-lang {
    width: 40px;
    margin-left: 22px;
    line-height: 21px;
    text-align: center;
}
.tray-wifi, .tray-sound, .tray-battery {
    width: 20px;
    height: 18px;
}
.tray-wifi {
    margin-left: 17px;
}
.tray-sound, .tray-battery {
    margin-left: 10px;
}
.tray-clock {
    width: 80px;
    margin-left: 14px;
    line-height: 20px;
    text-align: right;
}
.tray-notify {
    width: 20px;
    height: 20px;
    margin-left: 10px;
    border-radius: 50%;
    background-color: #b5b5b5;
    color: #1d1d1d;
    font-size: 12px;
    line-height: 20px;
    text-align: center;
}
```
